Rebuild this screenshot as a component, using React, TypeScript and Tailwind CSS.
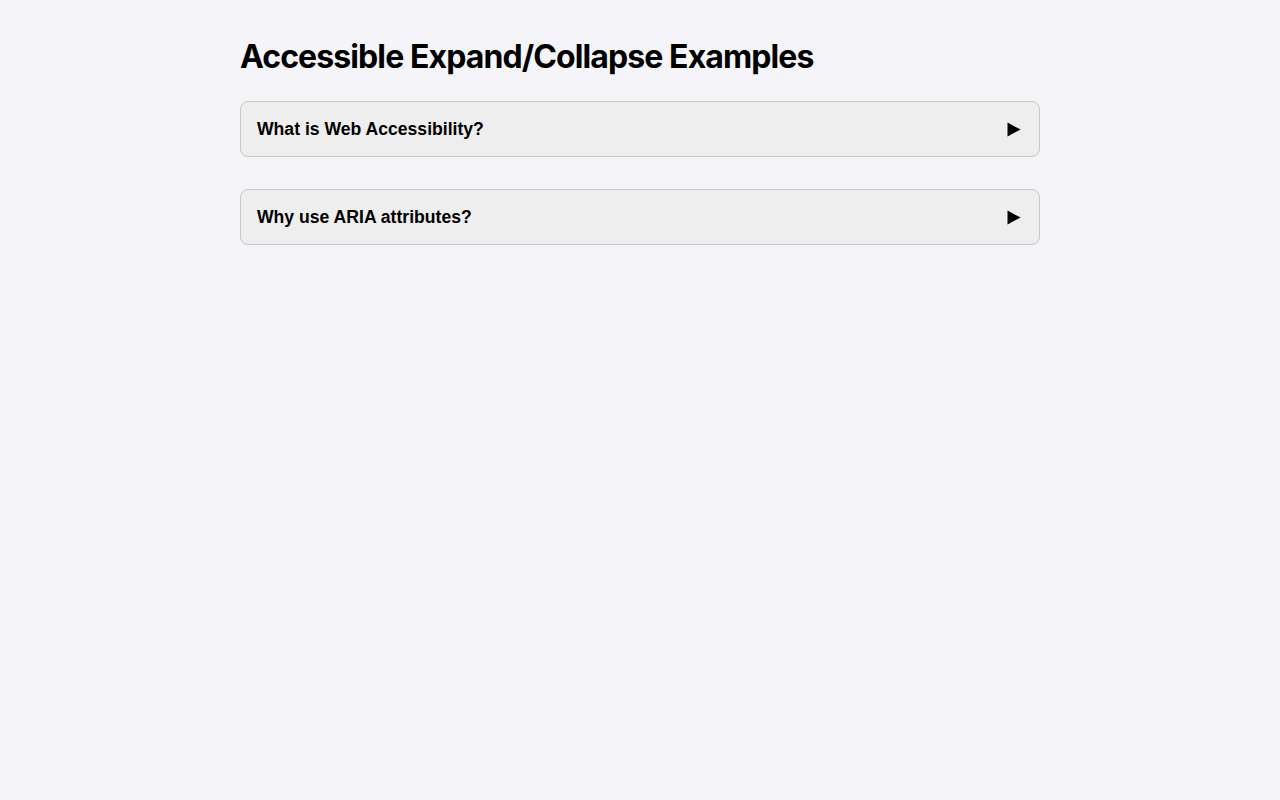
const items = ['What is Web Accessibility?', 'Why use ARIA attributes?'];

export default function App() {
  return (
    <div className="min-h-[800px] bg-[#f4f4f9] px-5 pt-[37px]">
      <div className="mx-auto w-[800px]">
        <h1 className="mb-[24px] font-['Inter',sans-serif] text-[32px] font-bold leading-[40px] tracking-[-0.9px] text-black">
          Accessible Expand/Collapse Examples
        </h1>
        <div className="flex flex-col gap-8">
          {items.map(item => (
            <button
              key={item}
              aria-expanded="false"
              className="flex h-[56px] w-full items-center justify-between rounded-lg border border-[#c8c8c8] bg-[#eeeeee] px-4 text-left font-['Liberation_Sans',Arial,sans-serif] text-[17.6px] font-bold text-black"
            >
              <span>{item}</span>
              <svg width="14" height="15" viewBox="0 0 14 15" className="mr-[2px]">
                <path d="M0.5 0.5 L13.5 7.5 L0.5 14.5 Z" fill="black" />
              </svg>
            </button>
          ))}
        </div>
      </div>
    </div>
  );
}
